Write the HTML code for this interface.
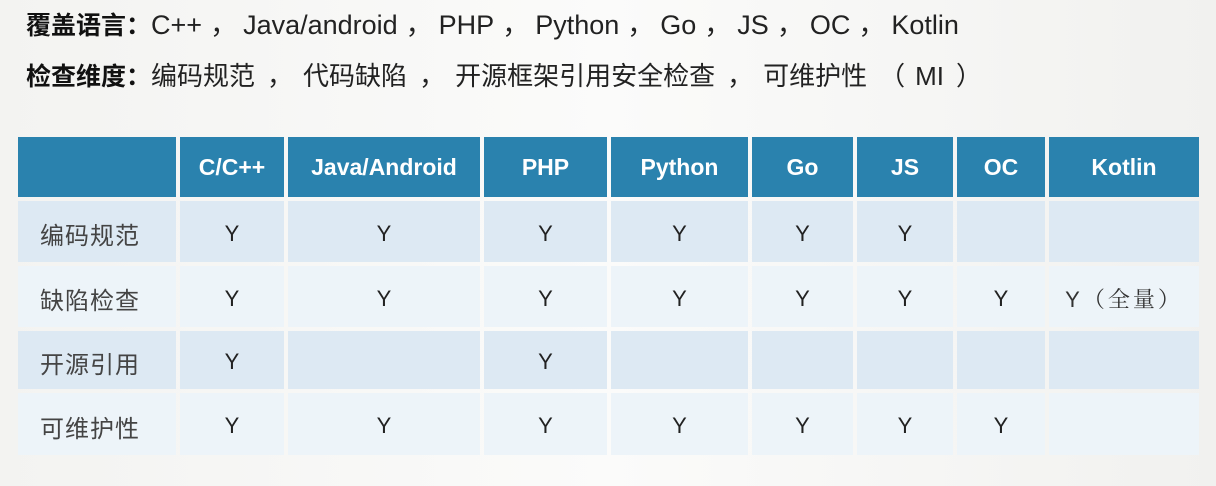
<!DOCTYPE html>
<html><head><meta charset="utf-8"><style>
body{margin:0;width:1216px;height:486px;background:linear-gradient(90deg,#f3f3f1,#fbfbfa 50%,#f1f1ef);overflow:hidden;position:relative;font-family:"Liberation Sans","Noto Sans CJK SC",sans-serif}
.t{position:absolute;left:26px;font-size:26px;color:#222;white-space:nowrap}
.t b{font-weight:bold;color:#111;font-size:25px}
.t i{font-style:normal;display:inline-block;margin:0 6px 0 8px}
.t2 i{margin:0 10px 0 12px}
.c{position:absolute;display:flex;align-items:center;justify-content:center;font-size:22px;color:#222;padding-top:4px;box-sizing:border-box}
.h{background:#2a82ae;color:#fff;font-weight:bold;font-size:23px;padding-top:0}
.r1{background:#dde9f3}.r2{background:#edf4f9}
.l{justify-content:flex-start;padding-left:22px;color:#444;font-size:24px;letter-spacing:1px}
.k{font-family:"Liberation Sans","Noto Serif CJK SC",serif;letter-spacing:3px;color:#333}
</style></head><body>
<div class="t" style="top:3px;font-size:27px"><b>覆盖语言：</b>C++<i>，</i>Java/android<i>，</i>PHP<i>，</i>Python<i>，</i>Go<i>，</i>JS<i>，</i>OC<i>，</i>Kotlin</div>
<div class="t t2" style="top:56px"><b>检查维度：</b>编码规范<i>，</i>代码缺陷<i>，</i>开源框架引用安全检查<i>，</i>可维护性<i>（</i>MI<i>）</i></div>
<div id="tb"></div>
<script>
var xs=[[18,176],[180,284],[288,480],[484,607],[611,748],[752,853],[857,953],[957,1045],[1049,1199]];
var hd=["","C/C++","Java/Android","PHP","Python","Go","JS","OC","Kotlin"];
var rows=[[201,262,"编码规范","YYYYYY  "],[266,327,"缺陷检查","YYYYYYYK"],[331,389,"开源引用","Y Y     "],[393,455,"可维护性","YYYYYYY "]];
var h="";
xs.forEach(function(x,i){h+='<div class="c h" style="left:'+x[0]+'px;width:'+(x[1]-x[0])+'px;top:137px;height:60px">'+hd[i]+'</div>';});
rows.forEach(function(r,ri){xs.forEach(function(x,i){var t=i==0?r[2]:r[3][i-1];if(t==" ")t="";if(t=="K")t='<span class="k">Y（全量）</span>';
h+='<div class="c '+(ri%2?'r2':'r1')+(i==0?' l':'')+'" style="left:'+x[0]+'px;width:'+(x[1]-x[0])+'px;top:'+r[0]+'px;height:'+(r[1]-r[0])+'px">'+t+'</div>';});});
document.getElementById('tb').innerHTML=h;
</script>
</body></html>
